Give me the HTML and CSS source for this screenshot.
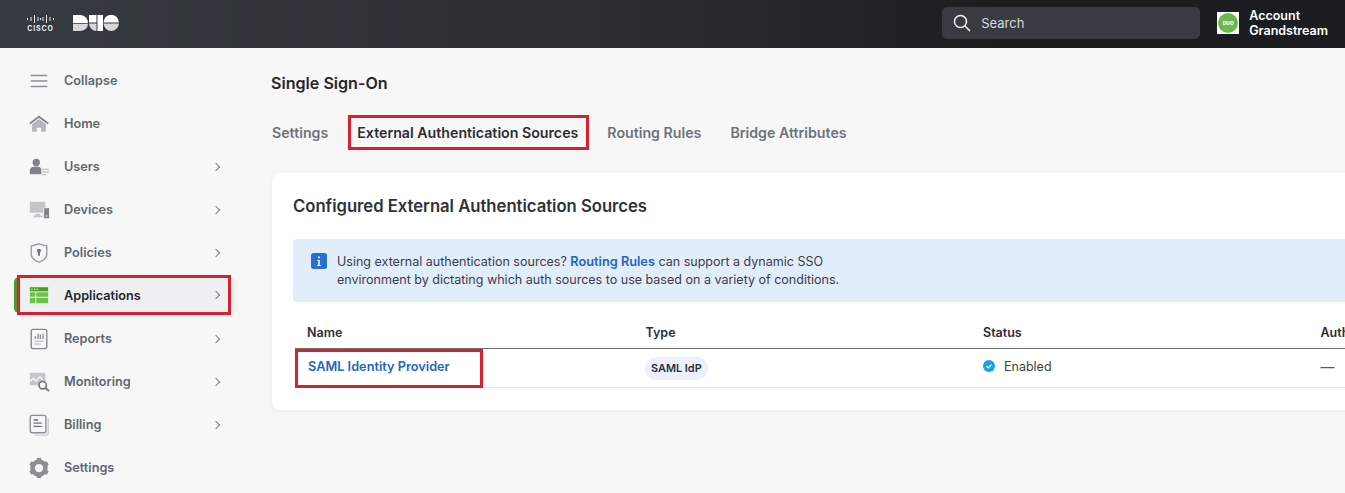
FILE: index.html
```html
<!DOCTYPE html>
<html>
<head>
  <meta charset="UTF-8">
  <title>Single Sign-On</title>
  <link rel="stylesheet" href="styles.css">
</head>
<body>
  <header class="topbar">
    <div class="logos">
      <div class="cisco">
        <svg width="27" height="10" viewBox="0 0 27 10">
          <path d="M.5 4v2M4 3v4M7.500 1v8M11 3v4M13.500 4v2M16 3v4M19.500 1v8M23 3v4M26.500 4v2" stroke="#e6e8ea" stroke-width="1" fill="none"/>
        </svg>
        <span class="cisco-name">CISCO</span>
      </div>
      <svg class="duo-logo" width="46" height="16" viewBox="0 0 46 16">
        <path d="M0 0h7a8 8 0 0 1 8 8H0z" fill="#fff"/>
        <path d="M0 8.800h15a8 7.200 0 0 1-8 7.200H0z" fill="#d5d7da"/>
        <path d="M16 0h7.500v7.500H16z" fill="#fff"/>
        <path d="M16 8.500h7.500V16A7.500 7.500 0 0 1 16 8.500z" fill="#d5d7da"/>
        <path d="M24.500 0H30v16h-5.500z" fill="#fff"/>
        <path d="M30.500 7.500a7.700 7.700 0 0 1 15.400 0z" fill="#fff"/>
        <path d="M30.500 8.500h15.400a7.700 7.500 0 0 1-15.400 0z" fill="#d5d7da"/>
      </svg>
    </div>
    <div class="top-right">
      <div class="search">
        <svg width="18" height="18" viewBox="0 0 18 18" fill="none" stroke="#f1f2f3" stroke-width="1.500">
          <circle cx="7.500" cy="7.500" r="6"/>
          <path d="M12 12l5 5"/>
        </svg>
        <span>Search</span>
      </div>
      <div class="account">
        <div class="account-logo"><span class="account-dot">DUO</span></div>
        <div class="account-text">Account<br>Grandstream</div>
      </div>
    </div>
  </header>

  <div class="layout">
    <nav class="sidebar">
      <a class="nav-item">
        <svg class="nav-icon" viewBox="0 0 24 24" fill="none" stroke="#8b9096" stroke-width="1.500">
          <path d="M3 6h18M3 12h18M3 18h18"/>
        </svg>
        <span>Collapse</span>
      </a>
      <a class="nav-item">
        <svg class="nav-icon" viewBox="0 0 24 24">
          <path d="M2 11.500L12 4l10 7.500" fill="none" stroke="#85898f" stroke-width="2"/>
          <path d="M4.500 12L12 6.500l7.500 5.500v8.500h-5V16h-5v4.500h-5z" fill="#b3b6ba"/>
        </svg>
        <span>Home</span>
      </a>
      <a class="nav-item">
        <svg class="nav-icon" viewBox="0 0 24 24">
          <circle cx="9" cy="7" r="4" fill="#7d8288"/>
          <path d="M2 20v-4c0-3 3-4.500 7-4.500s5.500 1.500 5.500 4v4.500z" fill="#7d8288"/>
          <path d="M15 14.500h8M15 17.500h8M15 20.500h5" stroke="#b7babd" stroke-width="1.200"/>
        </svg>
        <span>Users</span>
        <span class="chevron"></span>
      </a>
      <a class="nav-item">
        <svg class="nav-icon" viewBox="0 0 24 24">
          <path d="M2 3h17v12H2zM8 16h5v2h3v2H6v-2h2z" fill="#c3c5c8"/>
          <rect x="17" y="9.500" width="6.500" height="12" rx="1" fill="#7f8489" stroke="#f7f7f8"/>
          <circle cx="20.200" cy="18.500" r=".9" fill="#f7f7f8"/>
        </svg>
        <span>Devices</span>
        <span class="chevron"></span>
      </a>
      <a class="nav-item">
        <svg class="nav-icon" viewBox="0 0 24 24">
          <path d="M12 2l8.500 2.500V13c0 4.500-4 7.500-8.500 9-4.500-1.500-8.500-4.500-8.500-9V4.500z" fill="#f7f7f8" stroke="#96999e" stroke-width="1.500"/>
          <circle cx="12" cy="9.500" r="2.200" fill="#6f747a"/>
          <path d="M11 10h2v5h-2z" fill="#6f747a"/>
        </svg>
        <span>Policies</span>
        <span class="chevron"></span>
      </a>
      <a class="nav-item nav-active marked">
        <svg class="nav-icon" viewBox="0 0 24 24">
          <path d="M2 3.500h20V8H2z" fill="#4e9a2c"/>
          <path d="M2 9h6v5H2zM9 9h13v5H9zM2 15h6v6H2zM9 15h13v6H9z" fill="#6cc24a"/>
          <path d="M3.500 5.700h1.500M6.500 5.700h1.500M9.500 5.700h1.500" stroke="#fff" stroke-width="1.200"/>
        </svg>
        <span>Applications</span>
        <span class="chevron"></span>
      </a>
      <a class="nav-item">
        <svg class="nav-icon" viewBox="0 0 24 24" fill="none">
          <rect x="3.500" y="1.500" width="17" height="21" rx="2" stroke="#85898f" stroke-width="1.500"/>
          <path d="M8 12V9M11 12V6M13.500 12V7M16.500 12V6" stroke="#85898f" stroke-width="1.400"/>
          <path d="M7 14.500h10M7 17.500h7" stroke="#b3b6ba" stroke-width="1.200"/>
        </svg>
        <span>Reports</span>
        <span class="chevron"></span>
      </a>
      <a class="nav-item">
        <svg class="nav-icon" viewBox="0 0 24 24">
          <path d="M2 2h17v13.500H2z" fill="#c3c5c8"/>
          <path d="M2 11l4-3 3 3 4-5 3 4" fill="none" stroke="#f7f7f8" stroke-width="1.500"/>
          <circle cx="16" cy="15.500" r="4" fill="#f7f7f8" stroke="#6f747a" stroke-width="1.800"/>
          <path d="M19 18.500l4 3.500" stroke="#6f747a" stroke-width="2"/>
        </svg>
        <span>Monitoring</span>
        <span class="chevron"></span>
      </a>
      <a class="nav-item">
        <svg class="nav-icon" viewBox="0 0 24 24" fill="none">
          <path d="M7 23h13.500a1.500 1.500 0 0 0 1.500-1.500V5" stroke="#c9cbce" stroke-width="1.500"/>
          <rect x="2.500" y="1.500" width="17" height="19" rx="2" stroke="#8b9096" stroke-width="1.500"/>
          <path d="M6 6.500h5M6 10h9M6 13.500h9" stroke="#6f747a" stroke-width="1.500"/>
        </svg>
        <span>Billing</span>
        <span class="chevron"></span>
      </a>
      <a class="nav-item">
        <svg class="nav-icon" viewBox="0 0 24 24">
          <circle cx="12" cy="12" r="7" fill="none" stroke="#8b8f94" stroke-width="5"/>
          <path d="M12 12V1M12 12l9.500-5.500M12 12l9.500 5.500M12 12v11M12 12l-9.500 5.500M12 12L2.500 6.500" stroke="#8b8f94" stroke-width="4.500" stroke-dasharray="0 8.500 4 10"/>
        </svg>
        <span>Settings</span>
      </a>
    </nav>

    <main class="content">
      <h1 class="page-title">Single Sign-On</h1>
      <div class="tabs">
        <a class="tab">Settings</a>
        <a class="tab tab-active marked">External Authentication Sources</a>
        <a class="tab">Routing Rules</a>
        <a class="tab">Bridge Attributes</a>
      </div>

      <section class="card">
        <h2 class="card-title">Configured External Authentication Sources</h2>
        <div class="notice">
          <svg class="notice-icon" width="16" height="16" viewBox="0 0 16 16">
            <rect width="16" height="16" rx="2.500" fill="#2a6fd0"/>
            <path d="M6.500 7h2.200v5H10v1H6v-1h1.200V8H6.500zM7.200 3.300h1.500v2H7.200z" fill="#fff"/>
          </svg>
          <p>Using external authentication sources? <a class="link">Routing Rules</a> can support a dynamic SSO<br>environment by dictating which auth sources to use based on a variety of conditions.</p>
        </div>

        <div class="table">
          <div class="table-head">
            <div class="col-name">Name</div>
            <div class="col-type">Type</div>
            <div class="col-status">Status</div>
            <div class="col-auth">Auth</div>
          </div>
          <div class="table-row">
            <div class="col-name name-cell"><a class="link link-strong marked">SAML Identity Provider</a></div>
            <div class="col-type"><span class="pill">SAML IdP</span></div>
            <div class="col-status status-cell">
              <svg width="12" height="12" viewBox="0 0 12 12">
                <circle cx="6" cy="6" r="6" fill="#1d9fe8"/>
                <path d="M3.500 6.200l1.800 1.600 3.200-3.300" fill="none" stroke="#fff" stroke-width="1.200"/>
              </svg>
              <span>Enabled</span>
            </div>
            <div class="col-auth col-dash">—</div>
          </div>
        </div>
      </section>
    </main>
  </div>
</body>
</html>
```

FILE: styles.css
```css
html, body {
  height: 100%;
}
body {
  margin: 0;
  font-family: Inter, "Liberation Sans", sans-serif;
  background-color: #f7f7f8;
  color: #2b2e33;
  overflow: hidden;
}
.topbar {
  height: 48px;
  box-sizing: border-box;
  padding-bottom: 2px;
  display: flex;
  justify-content: space-between;
  align-items: center;
  background: linear-gradient(90deg, #363b41 0%, #2b2e33 45%, #1b1d21 75%, #1b1d21 100%);
  color: #fff;
}
.logos {
  display: flex;
  align-items: center;
  gap: 19px;
  padding-left: 27px;
}
.cisco {
  display: flex;
  flex-direction: column;
  align-items: center;
  gap: 1px;
}
.cisco-name {
  font-size: 7px;
  font-weight: 700;
  letter-spacing: 0.8px;
  line-height: 8px;
  color: #e6e8ea;
}
.top-right {
  display: flex;
  align-items: center;
  gap: 17px;
  padding-right: 17px;
}
.search {
  width: 258px;
  height: 32px;
  box-sizing: border-box;
  padding-left: 11px;
  display: flex;
  align-items: center;
  gap: 10px;
  border-radius: 5px;
  background-color: #383c42;
  font-size: 13px;
  color: #d8dadc;
}
.account {
  display: flex;
  align-items: center;
  gap: 10px;
}
.account-logo {
  width: 22px;
  height: 22px;
  background-color: #fff;
  display: flex;
  align-items: center;
  justify-content: center;
}
.account-dot {
  width: 20px;
  height: 20px;
  border-radius: 50%;
  background-color: #6cb84a;
  font-size: 5px;
  font-weight: 800;
  line-height: 20px;
  text-align: center;
}
.account-text {
  font-size: 12.500px;
  font-weight: 600;
  line-height: 15px;
}

.layout {
  display: flex;
  height: 445px;
}
.sidebar {
  width: 271px;
  flex-shrink: 0;
  box-sizing: border-box;
  padding: 11px 0 0 14px;
}
.nav-item {
  position: relative;
  width: 222px;
  height: 43px;
  box-sizing: border-box;
  padding: 0 17px 0 14px;
  display: flex;
  align-items: center;
  font-size: 12.700px;
  font-weight: 600;
  color: #62676e;
}
.nav-icon {
  width: 22px;
  height: 22px;
  margin-right: 14px;
  flex-shrink: 0;
}
.chevron {
  width: 5px;
  height: 5px;
  margin-left: auto;
  border-top: 1.500px solid #7a7f85;
  border-right: 1.500px solid #7a7f85;
  transform: rotate(45deg);
}
.nav-active {
  height: 36px;
  margin: 3px 0 4px;
  border-radius: 5px;
  border-left: 3px solid #4e9a2c;
  padding-left: 11px;
  background-color: #eff0f2;
  color: #24272c;
}

/* red annotation boxes drawn over the screenshot */
.marked {
  position: relative;
}
.marked::after {
  content: "";
  position: absolute;
  border: 3px solid #d9202e;
  pointer-events: none;
}
.nav-active::after {
  left: 0;
  top: -2px;
  width: 208px;
  height: 34px;
}
.tab-active::after {
  left: -9px;
  top: -9px;
  right: -11px;
  bottom: -9px;
}
.link-strong::after {
  left: -13px;
  top: -10px;
  right: -33px;
  bottom: -14px;
}

.content {
  flex: 1;
  min-width: 0;
  padding-top: 25px;
}
.page-title {
  margin: 0;
  font-size: 16.100px;
  font-weight: 600;
  line-height: 20px;
  color: #24272c;
}
.tabs {
  display: flex;
  gap: 29px;
  margin: 30px 0 0 1px;
  height: 18px;
  align-items: center;
}
.tab {
  font-size: 14.200px;
  font-weight: 600;
  color: #6e7379;
}
.tab-active {
  color: #2b2e33;
}
.card {
  margin: 32px 0 0 1px;
  width: 1200px;
  height: 237px;
  box-sizing: border-box;
  padding: 22px 21px 0;
  background-color: #fff;
  border-radius: 8px;
  box-shadow: 0 1px 6px rgba(0,0,0,0.06);
}
.card-title {
  margin: 0;
  font-size: 16.650px;
  font-weight: 600;
  line-height: 22px;
  color: #2f3237;
}
.notice {
  display: flex;
  gap: 10px;
  align-items: flex-start;
  height: 63px;
  box-sizing: border-box;
  margin-top: 22px;
  padding: 14px 18px;
  background-color: #e2edfc;
  border-radius: 4px;
}
.notice p {
  margin: 0;
  font-size: 12.530px;
  line-height: 18px;
  color: #3b3f45;
}
.link {
  color: #1f66c1;
  font-weight: 600;
  font-size: 12.750px;
}
.table {
  margin-left: 2px;
  font-size: 12.500px;
}
.table-head, .table-row {
  display: flex;
  align-items: center;
}
.table-head {
  height: 47px;
  box-sizing: border-box;
  padding-top: 15px;
  border-bottom: 1px solid #6b6e72;
  font-weight: 600;
  color: #2b2e33;
}
.table-row {
  height: 38px;
  border-bottom: 1px solid #e2e3e5;
  color: #3b3f45;
}
.col-name {
  width: 350.500px;
  padding-left: 12px;
  box-sizing: border-box;
  flex-shrink: 0;
}
.col-type {
  width: 337.500px;
  flex-shrink: 0;
}
.col-status {
  width: 337.500px;
  flex-shrink: 0;
}
.name-cell {
  margin-top: -4px;
}
.link-strong {
  display: inline-block;
  margin-left: 1px;
}
.pill {
  display: inline-block;
  margin-left: -1px;
  padding: 0 6.500px;
  line-height: 23px;
  font-size: 10.900px;
  font-weight: 600;
  border-radius: 12px;
  background-color: #eeeffc;
  color: #2b2e33;
}
.status-cell {
  display: flex;
  align-items: center;
  gap: 9px;
  margin-top: -4px;
}
.col-auth {
  white-space: nowrap;
}
.col-dash {
  margin-top: -4px;
  font-size: 14px;
  color: #55585d;
}
```
